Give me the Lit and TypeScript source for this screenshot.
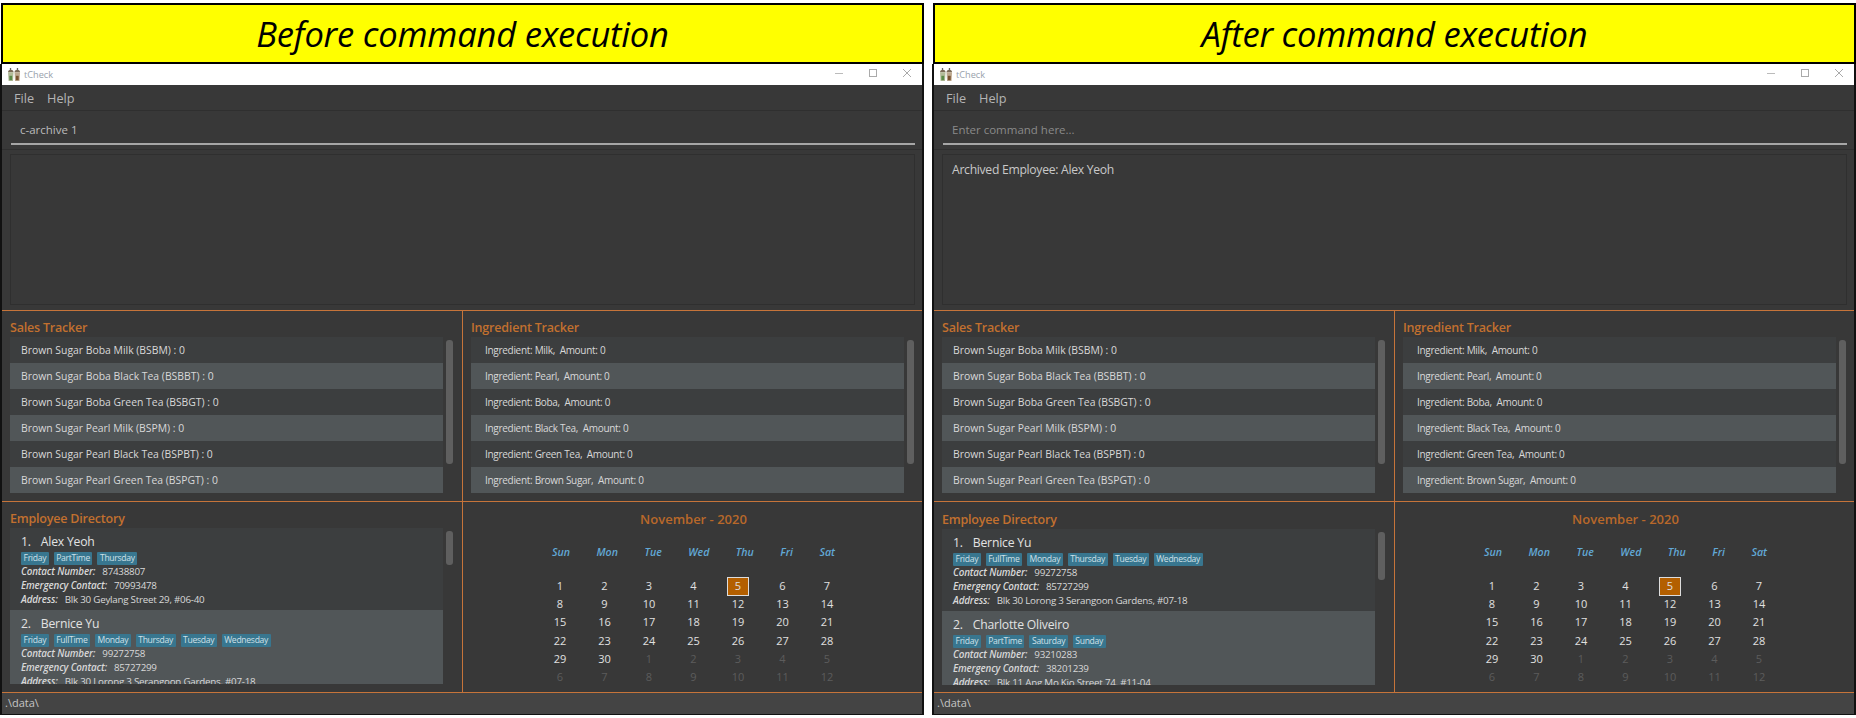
import { LitElement, html, css, svg } from "lit";
import { customElement, property } from "lit/decorators.js";

const SALES = [
  "Brown Sugar Boba Milk (BSBM) : 0",
  "Brown Sugar Boba Black Tea (BSBBT) : 0",
  "Brown Sugar Boba Green Tea (BSBGT) : 0",
  "Brown Sugar Pearl Milk (BSPM) : 0",
  "Brown Sugar Pearl Black Tea (BSPBT) : 0",
  "Brown Sugar Pearl Green Tea (BSPGT) : 0",
];
const INGREDIENTS = ["Milk", "Pearl", "Boba", "Black Tea", "Green Tea", "Brown Sugar"];
const DOW = ["Sun", "Mon", "Tue", "Wed", "Thu", "Fri", "Sat"];

interface Emp { name: string; tags: string[]; phone: string; emergency: string; address: string }
const ALEX: Emp = { name: "Alex Yeoh", tags: ["Friday", "PartTime", "Thursday"], phone: "87438807", emergency: "70993478", address: "Blk 30 Geylang Street 29, #06-40" };
const BERNICE: Emp = { name: "Bernice Yu", tags: ["Friday", "FullTime", "Monday", "Thursday", "Tuesday", "Wednesday"], phone: "99272758", emergency: "85727299", address: "Blk 30 Lorong 3 Serangoon Gardens, #07-18" };
const CHARLOTTE: Emp = { name: "Charlotte Oliveiro", tags: ["Friday", "PartTime", "Saturday", "Sunday"], phone: "93210283", emergency: "38201239", address: "Blk 11 Ang Mo Kio Street 74, #11-04" };

const days: { d: number; cur: boolean }[] = [];
for (let i = 1; i <= 30; i++) days.push({ d: i, cur: true });
for (let i = 1; i <= 12; i++) days.push({ d: i, cur: false });

const icon = svg`<svg width="13" height="13" viewBox="0 0 14 15" preserveAspectRatio="none">
  <rect x="2" y="0" width="1.4" height="4" fill="#666"/><rect x="9.5" y="0" width="1.4" height="4" fill="#666"/>
  <path d="M0 5 Q0 2 3 2 Q6 2 6 5Z" fill="#7a6a56"/><path d="M7 5 Q7 2 10 2 Q13 2 13 5Z" fill="#7a6a56"/>
  <path d="M0 5h6l-.6 10H.6Z" fill="#b3bb99"/><path d="M7 5h6l-.6 10H7.6Z" fill="#bda88e"/>
  <rect x="1.5" y="9" width="3" height="5" fill="#5b8a48"/><rect x="8.5" y="9" width="3" height="5" fill="#7a5230"/>
</svg>`;

@customElement("app-pane")
class AppPane extends LitElement {
  @property() heading = "";
  @property() command = "";
  @property() placeholder = "";
  @property() result = "";
  @property({ attribute: false }) employees: Emp[] = [];
  @property({ type: Number }) thumb = 42;
  @property({ type: Boolean }) late = false;

  static styles = css`
    :host { display: block; font-family: "Open Sans", "Noto Sans", sans-serif; color: #ddd; height: 711px; }
    .banner { height: 57px; margin-left: 1px; background: #ffff00; border: 2px solid #000; display: flex; align-items: center; justify-content: center; }
    .banner span { font-size: 34.5px; font-style: italic; color: #000; font-weight: 400; letter-spacing: -0.2px; }
    .win { height: 650px; border: 2px solid #111; border-top: none; display: flex; flex-direction: column; background: #383838; }
    .title { height: 21px; flex: none; background: #fff; display: flex; align-items: center; padding-left: 6px; }
    .title .name { margin-left: 3px; font-size: 9.2px; color: #98a2ac; margin-top: -1px; }
    .ctrls { margin-left: auto; display: flex; align-items: center; gap: 24px; margin-right: 10px; margin-top: -4px; }
    .menu { height: 26px; flex: none; border-bottom: 1px solid #2f2f2f; box-sizing: border-box; display: flex; align-items: center; gap: 13px; padding-left: 12px; font-size: 12.7px; color: #b4b4b4; }
    .cmdbar { height: 39px; flex: none; border-bottom: 1px solid #2f2f2f; box-sizing: border-box; padding: 0 7px 0 9px; }
    .cmd { height: 34px; border-bottom: 2px solid #a6a6a6; box-sizing: border-box; padding: 11px 0 0 9px; font-size: 11.5px; line-height: 16px; color: #bbb; }
    .cmd.ph { color: #8a8a8a; }
    .result { height: 151px; flex: none; margin: 4px 7px 5px 8px; box-sizing: border-box; border: 1px solid #2f2f2f; padding: 7px 9px; font-size: 12.2px; line-height: 16px; color: #c8c8c8; letter-spacing: -0.3px; }
    .row { flex: none; display: grid; grid-template-columns: 460px 1fr; border-top: 1px solid #c6743a; }
    .row.one { height: 190px; }
    .row.two { height: 190px; }
    .cell { padding: 8px 8px 0 8px; min-width: 0; }
    .cell.late { padding-top: 9px; }
    .cell.right { border-left: 1px solid #c6743a; }
    .cell.cal { padding-left: 10px; }
    .h { font-size: 12.5px; font-weight: 600; color: #c2702f; line-height: 17px; height: 18px; letter-spacing: -0.2px; }
    .listwrap { display: flex; height: 156px; }
    .list { width: 433px; flex: none; overflow: hidden; background: #3c3e3f; }
    .sb { width: 7px; margin: 3px 0 0 3px; border-radius: 3px; background: #5f5f5f; }
    .item { height: 26px; display: flex; align-items: center; padding-left: 11px; font-size: 10.4px; color: #d8d8d8; }
    .item.ing { padding-left: 14px; font-size: 10px; letter-spacing: -0.3px; }
    .item:nth-child(even), .card:nth-child(even) { background: #515658; }
    .card { height: 82px; box-sizing: border-box; padding: 5px 0 0 11px; }
    .nm { font-size: 12.2px; letter-spacing: -0.2px; line-height: 17px; height: 19px; color: #e2e2e2; display: flex; }
    .nm b { font-weight: 400; margin-right: 10px; }
    .tags { display: flex; gap: 5px; height: 13px; }
    .tag { background: #38768f; color: #cfe0e8; font-size: 8.6px; letter-spacing: -0.3px; line-height: 13px; padding: 0 2.5px; border-radius: 1px; }
    .ln { font-size: 9.8px; letter-spacing: -0.25px; line-height: 14px; height: 14px; color: #d8d8d8; white-space: nowrap; }
    .ln i { font-weight: 600; margin-right: 7px; letter-spacing: -0.15px; }
    .calt { text-align: center; font-size: 13px; font-weight: 600; color: #b8682a; line-height: 19px; height: 19px; }
    .dow { display: flex; justify-content: center; gap: 26.5px; margin-top: 14px; height: 18px; line-height: 18px; font-size: 10.6px; font-style: italic; font-weight: 600; color: #62a8d6; }
    .grid { display: grid; grid-template-columns: repeat(7, 44.5px); grid-auto-rows: 18.2px; justify-content: center; margin-top: 16px; font-size: 11px; color: #e0e0e0; }
    .d { display: flex; align-items: center; justify-content: center; }
    .d.off { color: #5c5c5c; }
    .d span { min-width: 20px; height: 18px; line-height: 18px; text-align: center; box-sizing: border-box; }
    .d.today span { background: #b35f00; border: 1px solid #ddd; line-height: 16px; min-width: 22px; height: 19px; }
    .status { flex: 1; background: #444; border-top: 1px solid #c6743a; padding-left: 3px; font-size: 11px; line-height: 19px; color: #c4c4c4; }
  `;

  private card(e: Emp, i: number) {
    return html`<div class="card">
      <div class="nm"><b>${i + 1}.</b><span>${e.name}</span></div>
      <div class="tags">${e.tags.map((t) => html`<span class="tag">${t}</span>`)}</div>
      <div class="ln"><i>Contact Number:</i>${e.phone}</div>
      <div class="ln"><i>Emergency Contact:</i>${e.emergency}</div>
      <div class="ln"><i>Address:</i>${e.address}</div>
    </div>`;
  }

  render() {
    return html`
      <div class="banner"><span>${this.heading}</span></div>
      <div class="win">
        <div class="title">${icon}<span class="name">tCheck</span>
          <div class="ctrls">
            <svg width="10" height="10" viewBox="0 0 10 10"><path d="M1 5.5h8" stroke="#bbb" fill="none"/></svg>
            <svg width="10" height="10" viewBox="0 0 10 10"><rect x="1.5" y="1.5" width="7" height="7" stroke="#aaa" fill="none"/></svg>
            <svg width="10" height="10" viewBox="0 0 10 10"><path d="M1 1l8 8M9 1l-8 8" stroke="#aaa" fill="none"/></svg>
          </div>
        </div>
        <div class="menu"><span>File</span><span>Help</span></div>
        <div class="cmdbar"><div class="cmd ${this.command ? "" : "ph"}">${this.command || this.placeholder}</div></div>
        <div class="result">${this.result}</div>
        <div class="row one">
          <div class="cell">
            <div class="h">Sales Tracker</div>
            <div class="listwrap">
              <div class="list">${SALES.map((s) => html`<div class="item">${s}</div>`)}</div>
              <div class="sb" style="height:124px"></div>
            </div>
          </div>
          <div class="cell right">
            <div class="h">Ingredient Tracker</div>
            <div class="listwrap">
              <div class="list">${INGREDIENTS.map((s) => html`<div class="item ing">Ingredient: ${s},&nbsp; Amount: 0</div>`)}</div>
              <div class="sb" style="height:124px"></div>
            </div>
          </div>
        </div>
        <div class="row two">
          <div class="cell ${this.late ? "late" : ""}">
            <div class="h">Employee Directory</div>
            <div class="listwrap">
              <div class="list">${this.employees.map((e, i) => this.card(e, i))}</div>
              <div class="sb" style="height:${this.thumb}px"></div>
            </div>
          </div>
          <div class="cell right cal">
            <div class="calt">November - 2020</div>
            <div class="dow">${DOW.map((d) => html`<span>${d}</span>`)}</div>
            <div class="grid">${days.map((x) => html`<div class="d ${x.cur ? "" : "off"} ${x.cur && x.d === 5 ? "today" : ""}"><span>${x.d}</span></div>`)}</div>
          </div>
        </div>
        <div class="status">.\\data\\</div>
      </div>
    `;
  }
}

@customElement("app-root")
class AppRoot extends LitElement {
  static styles = css`
    :host { display: grid; grid-template-columns: 924px 924px; column-gap: 8px; padding: 3px 0 0 0; background: #fff; height: 715px; box-sizing: border-box; }
  `;
  render() {
    return html`
      <app-pane heading="Before command execution" command="c-archive 1" .employees=${[ALEX, BERNICE]} .thumb=${34}></app-pane>
      <app-pane heading="After command execution" placeholder="Enter command here..." result="Archived Employee: Alex Yeoh" .employees=${[BERNICE, CHARLOTTE]} .thumb=${48} .late=${true}></app-pane>
    `;
  }
}
